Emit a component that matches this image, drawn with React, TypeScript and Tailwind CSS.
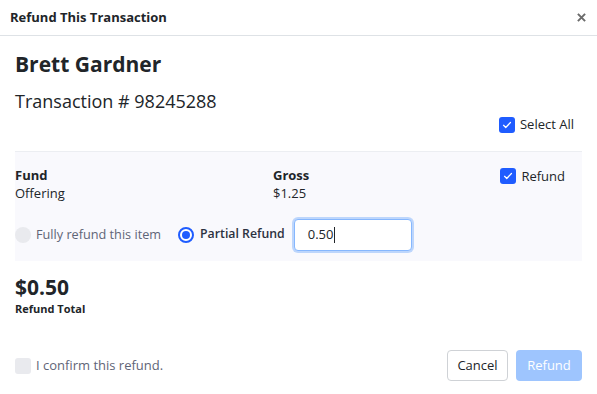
import React from "react";

function CheckIcon() {
  return (
    <svg viewBox="0 0 16 16" className="h-[10px] w-[10px]" fill="none">
      <path d="M2.5 8.5l3.5 3.5 7.5-8" stroke="white" strokeWidth="2" strokeLinecap="round" strokeLinejoin="round" />
    </svg>
  );
}

function Checkbox({ checked }: { checked?: boolean }) {
  return checked ? (
    <span className="flex h-4 w-4 items-center justify-center rounded-[3px] bg-[#1f5cff]">
      <CheckIcon />
    </span>
  ) : (
    <span className="h-4 w-4 rounded-[3px] bg-[#e9eaee]"></span>
  );
}

export default function App() {
  return (
    <div className="flex h-[394px] w-[597px] flex-col bg-white text-[#212529]" style={{ fontFamily: '"Open Sans", sans-serif' }}>
      {/* Header */}
      <div className="flex h-[36px] items-center justify-between border-b border-[#dee2e6] pl-[10px] pr-[11px]">
        <div className="text-[13px] font-bold">Refund This Transaction</div>
        <svg viewBox="0 0 10 10" className="h-[9px] w-[9px]">
          <path d="M1 1l8 8M9 1l-8 8" stroke="#6b6b6b" strokeWidth="2.2" />
        </svg>
      </div>

      {/* Body */}
      <div className="flex flex-1 flex-col px-[15px]">
        <div className="mt-[13px] text-[21px] font-bold leading-[30px]">Brett Gardner</div>
        <div className="mt-[9px] text-[18px] leading-[26px]">Transaction # 98245288</div>

        <div className="mt-[1px] flex justify-end pr-[8px]">
          <label className="flex items-center gap-[5px] text-[13px]">
            <Checkbox checked />
            <span>Select All</span>
          </label>
        </div>

        <div className="mt-[16px] border-t border-[#eceef2] bg-[#f9f9fd] pb-[10px] pt-[14px]">
          <div className="flex items-start">
            <div className="w-[258px]">
              <div className="text-[13px] font-bold leading-[18px]">Fund</div>
              <div className="text-[13px] leading-[18px]">Offering</div>
            </div>
            <div className="flex-1">
              <div className="text-[13px] font-bold leading-[18px]">Gross</div>
              <div className="text-[13px] leading-[18px]">$1.25</div>
            </div>
            <label className="mr-[17px] mt-[1px] flex items-center gap-[5px] text-[13px]">
              <Checkbox checked />
              <span>Refund</span>
            </label>
          </div>

          <div className="mt-[17px] flex items-center">
            <span className="h-4 w-4 rounded-full bg-[#e9eaee]"></span>
            <span className="ml-[5px] text-[12.7px] text-[#5f6577]">Fully refund this item</span>
            <span className="ml-[17px] flex h-4 w-4 items-center justify-center rounded-full border-2 border-[#1f5cff] bg-white">
              <span className="h-[8px] w-[8px] rounded-full bg-[#1f5cff]"></span>
            </span>
            <span className="ml-[6px] text-[12.3px] font-semibold text-[#2c3140]">Partial Refund</span>
            <div className="ml-[9px] flex h-[32px] w-[118px] items-center rounded-[4px] border border-[#86b7fe] bg-white pl-[13px] text-[13px] shadow-[0_0_0_2px_rgba(13,110,253,0.25)]">
              0.50<span className="ml-[1px] h-[16px] w-px bg-[#212529]"></span>
            </div>
          </div>
        </div>

        <div className="mt-[13px] text-[21px] font-bold leading-[26px]">$0.50</div>
        <div className="mt-[3px] text-[11px] font-bold leading-[12px]">Refund Total</div>

        <div className="mt-auto mb-[13px] flex items-center justify-between">
          <label className="flex items-center gap-[5px] text-[13px] text-[#5f6577]">
            <Checkbox />
            <span>I confirm this refund.</span>
          </label>
          <div className="flex gap-[8px]">
            <button className="h-[31px] w-[61px] rounded-[4px] border border-[#cfd2d6] bg-white text-[13px] text-[#212529]">Cancel</button>
            <button className="h-[31px] w-[66px] rounded-[4px] bg-[#9ec5fe] text-[13px] text-white">Refund</button>
          </div>
        </div>
      </div>
    </div>
  );
}
